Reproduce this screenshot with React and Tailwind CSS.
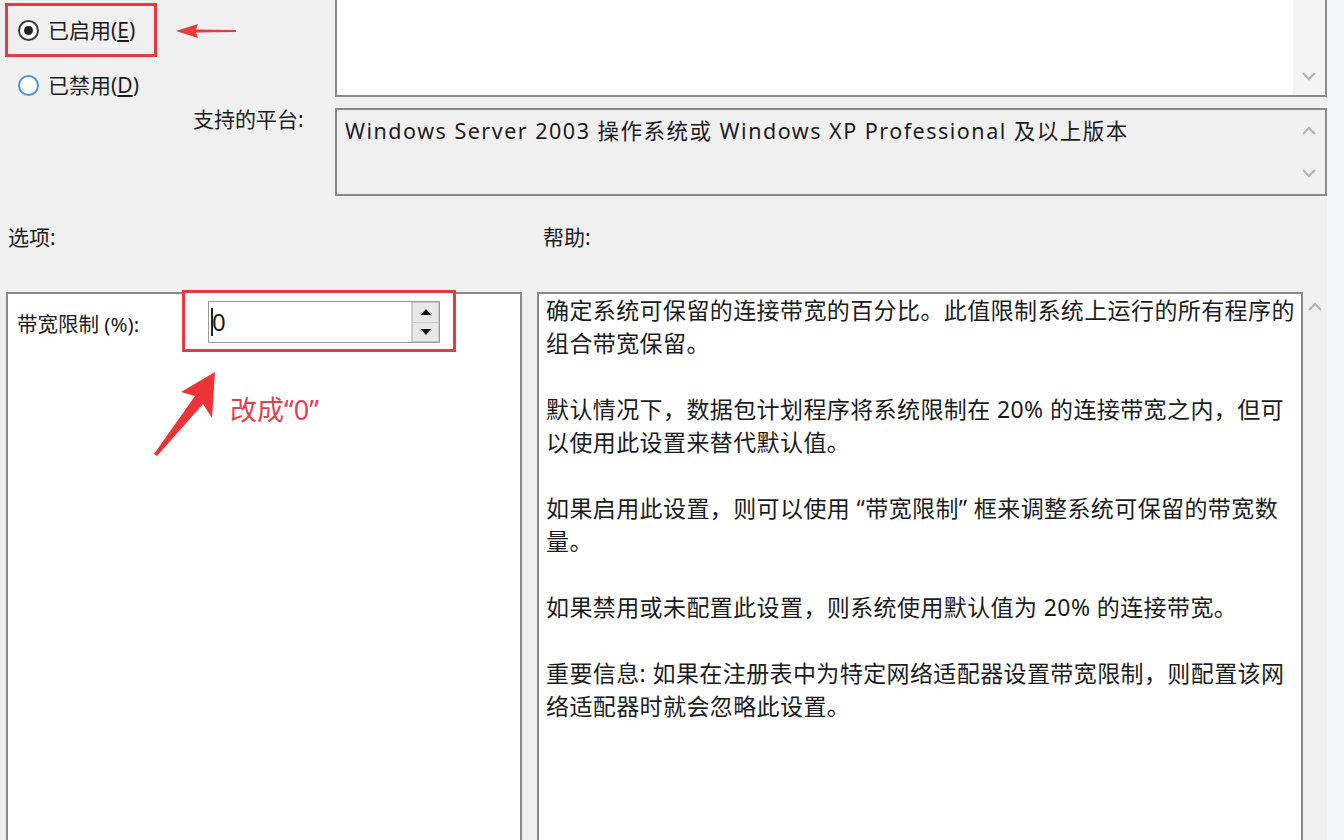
import React from "react";

const FONT = { fontFamily: '"Noto Sans", "Noto Sans CJK SC", sans-serif' };

function Chevron({ up = false }) {
  return (
    <svg width="16" height="10" viewBox="0 0 16 10">
      <path
        d={up ? "M2 8 L8 2 L14 8" : "M2 2 L8 8 L14 2"}
        fill="none"
        stroke="#b4b4b4"
        strokeWidth="2.4"
      />
    </svg>
  );
}

function Radio({ checked }) {
  return checked ? (
    <span className="w-[21px] h-[21px] rounded-full border-2 border-[#3c3c3c] bg-white flex items-center justify-center">
      <span className="w-[9px] h-[9px] rounded-full bg-[#222]" />
    </span>
  ) : (
    <span className="w-[21px] h-[21px] rounded-full border-2 border-[#4d96dc] bg-white" />
  );
}

const helpLines = [
  "确定系统可保留的连接带宽的百分比。此值限制系统上运行的所有程序的",
  "组合带宽保留。",
  "",
  "默认情况下，数据包计划程序将系统限制在 20% 的连接带宽之内，但可",
  "以使用此设置来替代默认值。",
  "",
  "如果启用此设置，则可以使用 “带宽限制” 框来调整系统可保留的带宽数",
  "量。",
  "",
  "如果禁用或未配置此设置，则系统使用默认值为 20% 的连接带宽。",
  "",
  "重要信息: 如果在注册表中为特定网络适配器设置带宽限制，则配置该网",
  "络适配器时就会忽略此设置。",
];

export default function App() {
  return (
    <div
      className="w-[1344px] h-[840px] overflow-hidden bg-[#f0f0f0] text-[#1c1c1c] flex relative"
      style={FONT}
    >
      <div className="w-[1327px] flex flex-col">
        {/* top area */}
        <div className="flex">
          <div className="w-[335px] flex flex-col">
            <div className="ml-[5px] mt-[3px] w-[152px] h-[54px] border-[3px] border-[#e53a3f] flex items-center pl-[10px] gap-[9px]">
              <Radio checked />
              <span className="text-[21px] leading-none">
                已启用(<span className="underline underline-offset-2">E</span>)
              </span>
            </div>
            <div className="ml-[18px] mt-[18px] flex items-center gap-[9px]">
              <Radio />
              <span className="text-[21px] leading-none">
                已禁用(<span className="underline underline-offset-2">D</span>)
              </span>
            </div>
            <div className="ml-[193px] mt-[13px] text-[21px] leading-none">支持的平台:</div>
          </div>
          <div className="flex-1 flex flex-col">
            <div className="h-[97px] bg-white border-2 border-t-0 border-[#8a8a8a] flex justify-end">
              <div className="w-[32px] bg-[#f4f4f4] flex items-end justify-center pb-[14px]">
                <Chevron />
              </div>
            </div>
            <div className="mt-[11px] h-[88px] bg-[#f0f0f0] border-2 border-[#8a8a8a] flex">
              <div className="flex-1 pl-[8px] pt-[8px] text-[21.5px] tracking-[1.5px] leading-tight whitespace-nowrap">
                Windows Server 2003 操作系统或 Windows XP Professional 及以上版本
              </div>
              <div className="w-[32px] bg-[#f0f0f0] flex flex-col items-center justify-between py-[16px]">
                <Chevron up />
                <Chevron />
              </div>
            </div>
          </div>
        </div>

        {/* section labels */}
        <div className="flex mt-[31px] text-[21px] leading-none">
          <div className="w-[543px] pl-[8px]">选项:</div>
          <div>帮助:</div>
        </div>

        {/* bottom panels */}
        <div className="flex mt-[44px] flex-1">
          <div className="ml-[6px] w-[516px] bg-white border-2 border-b-0 border-[#8a8a8a] flex flex-col">
            <div className="flex items-center mt-[-4px]">
              <span className="ml-[9px] mt-[6px] text-[20.5px] w-[165px]">带宽限制 (%):</span>
              <div className="w-[274px] h-[62px] border-[3px] border-[#e53a3f] pl-[23px] pt-[8px] bg-white">
                <div className="w-[232px] h-[42px] border border-[#9a9a9a] bg-white flex">
                  <div className="flex-1 flex items-center pl-[2px] text-[24px] leading-none">
                    <span className="w-[2px] h-[28px] bg-[#222] mr-[-1px]" />
                    <span>0</span>
                  </div>
                  <div className="w-[28px] flex flex-col border-l border-[#d0d0d0]">
                    <div className="flex-1 bg-[#e8e8e8] border border-[#c8c8c8] flex items-center justify-center">
                      <svg width="10" height="6" viewBox="0 0 10 6"><path d="M5 0 L10 6 L0 6 Z" fill="#111" /></svg>
                    </div>
                    <div className="flex-1 bg-[#e8e8e8] border border-t-0 border-[#c8c8c8] flex items-center justify-center">
                      <svg width="10" height="6" viewBox="0 0 10 6"><path d="M0 0 L10 0 L5 6 Z" fill="#111" /></svg>
                    </div>
                  </div>
                </div>
              </div>
            </div>
            <div className="flex items-center ml-[222px] mt-[44px] text-[27px] leading-none text-[#e0414f]">
              改成“0”
            </div>
          </div>
          <div className="ml-[15px] w-[766px] bg-white border-2 border-b-0 border-[#8a8a8a] pl-[7px] pt-[0px]">
            {helpLines.map((l, i) => (
              <div key={i} className="h-[33px] leading-[33px] text-[23px] tracking-[0.4px] whitespace-nowrap">
                {l}
              </div>
            ))}
          </div>
          <div className="w-[24px] flex justify-center pt-[10px]">
            <Chevron up />
          </div>
        </div>
      </div>
      <div className="w-[17px] bg-[#f4f6f9]" />

      {/* annotation arrows */}
      <svg className="absolute left-[170px] top-[20px]" width="72" height="22" viewBox="0 0 72 22">
        <path d="M6 11 L28 4 L26 9.5 L66 10 L66 12 L26 12.5 L28 18 Z" fill="#ea3b3f" />
      </svg>
      <svg className="absolute left-[148px] top-[366px]" width="76" height="96" viewBox="0 0 76 96">
        <path d="M67 6 L64 52 L55 38 L9 90 L6 88 L47 30 L33 26 Z" fill="#ee3338" />
      </svg>
    </div>
  );
}
